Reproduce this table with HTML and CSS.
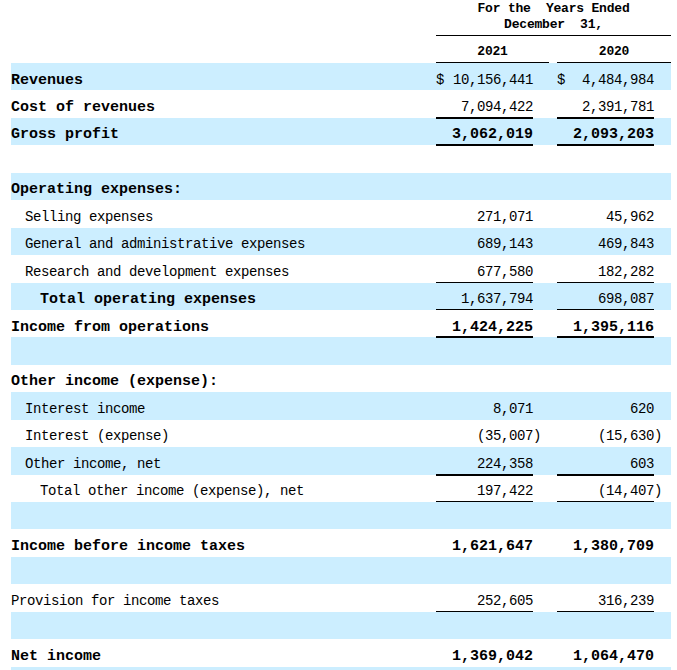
FILE: index.html
```html
<!DOCTYPE html>
<html>
<head>
<meta charset="utf-8">
<link rel="stylesheet" href="styles.css">
</head>
<body>
<div class="table">
  <div class="head head-top">
    <div class="hcell label-space"></div>
    <div class="hcell span-all"><span class="htext">For the  Years Ended
December  31,</span></div>
  </div>
  <div class="head head-years">
    <div class="hcell label-space"></div>
    <div class="hcell year y1">2021</div>
    <div class="hcell gap"></div>
    <div class="hcell year y2">2020</div>
  </div>
  <div class="body">
    <div class="row">
      <div class="label b">Revenues</div>
      <div class="val money"><span>$</span><span>10,156,441</span></div><div class="pad"></div><div class="gap"></div>
      <div class="val money"><span>$</span><span>4,484,984</span></div><div class="pad"></div>
    </div>
    <div class="row">
      <div class="label b">Cost of revenues</div>
      <div class="val thick">7,094,422</div><div class="pad"></div><div class="gap"></div>
      <div class="val thick">2,391,781</div><div class="pad"></div>
    </div>
    <div class="row">
      <div class="label b">Gross profit</div>
      <div class="val b thick">3,062,019</div><div class="pad"></div><div class="gap"></div>
      <div class="val b thick">2,093,203</div><div class="pad"></div>
    </div>
    <div class="row"></div>
    <div class="row">
      <div class="label b">Operating expenses:</div>
    </div>
    <div class="row">
      <div class="label i1">Selling expenses</div>
      <div class="val">271,071</div><div class="pad"></div><div class="gap"></div>
      <div class="val">45,962</div><div class="pad"></div>
    </div>
    <div class="row">
      <div class="label i1">General and administrative expenses</div>
      <div class="val">689,143</div><div class="pad"></div><div class="gap"></div>
      <div class="val">469,843</div><div class="pad"></div>
    </div>
    <div class="row">
      <div class="label i1">Research and development expenses</div>
      <div class="val thin">677,580</div><div class="pad"></div><div class="gap"></div>
      <div class="val thin">182,282</div><div class="pad"></div>
    </div>
    <div class="row">
      <div class="label b i2">Total operating expenses</div>
      <div class="val thin">1,637,794</div><div class="pad"></div><div class="gap"></div>
      <div class="val thin">698,087</div><div class="pad"></div>
    </div>
    <div class="row">
      <div class="label b">Income from operations</div>
      <div class="val b thick">1,424,225</div><div class="pad"></div><div class="gap"></div>
      <div class="val b thick">1,395,116</div><div class="pad"></div>
    </div>
    <div class="row"></div>
    <div class="row">
      <div class="label b">Other income (expense):</div>
    </div>
    <div class="row">
      <div class="label i1">Interest income</div>
      <div class="val">8,071</div><div class="pad"></div><div class="gap"></div>
      <div class="val">620</div><div class="pad"></div>
    </div>
    <div class="row">
      <div class="label i1">Interest (expense)</div>
      <div class="val">(35,007</div><div class="pad">)</div><div class="gap"></div>
      <div class="val">(15,630</div><div class="pad">)</div>
    </div>
    <div class="row">
      <div class="label i1">Other income, net</div>
      <div class="val thick">224,358</div><div class="pad"></div><div class="gap"></div>
      <div class="val thick">603</div><div class="pad"></div>
    </div>
    <div class="row">
      <div class="label i2">Total other income (expense), net</div>
      <div class="val thin">197,422</div><div class="pad"></div><div class="gap"></div>
      <div class="val thin">(14,407</div><div class="pad">)</div>
    </div>
    <div class="row"></div>
    <div class="row">
      <div class="label b">Income before income taxes</div>
      <div class="val b">1,621,647</div><div class="pad"></div><div class="gap"></div>
      <div class="val b">1,380,709</div><div class="pad"></div>
    </div>
    <div class="row"></div>
    <div class="row">
      <div class="label">Provision for income taxes</div>
      <div class="val thin">252,605</div><div class="pad"></div><div class="gap"></div>
      <div class="val thin">316,239</div><div class="pad"></div>
    </div>
    <div class="row"></div>
    <div class="row">
      <div class="label b">Net income</div>
      <div class="val b">1,369,042</div><div class="pad"></div><div class="gap"></div>
      <div class="val b">1,064,470</div><div class="pad"></div>
    </div>
    <div class="row"></div>
  </div>
</div>
</body>
</html>
```

FILE: styles.css
```css
html, body {
  margin: 0;
  padding: 0;
  background: #ffffff;
}

body {
  font-family: "Liberation Mono", "DejaVu Sans Mono", monospace;
  color: #000000;
  overflow: hidden;
}

.table {
  margin-left: 11px;
  width: 660px;
}

.head {
  display: grid;
  grid-template-columns: 425px 113px 8px 114px;
  font-weight: bold;
  font-size: 13px;
  letter-spacing: -0.2px;
  line-height: 16px;
}

.head-top {
  height: 36px;
  grid-template-columns: 425px 235px;
}

.head-top .span-all {
  border-bottom: 1px solid #000;
  text-align: center;
  padding-top: 1px;
  box-sizing: border-box;
}

.htext {
  white-space: pre;
}

.head-years {
  height: 27px;
}

.head-years .year {
  text-align: center;
  border-bottom: 1px solid #000;
  padding-top: 8px;
  box-sizing: border-box;
}

.body .row {
  display: grid;
  grid-template-columns: 425px 97px 16px 8px 97px 17px;
  height: 27.45px;
  align-items: stretch;
  font-size: 14px;
  letter-spacing: -0.4px;
  line-height: 15px;
}

.body .row:nth-child(odd) {
  background: #cceeff;
}

.label,
.val,
.pad {
  padding-top: 9.6px;
  box-sizing: border-box;
  white-space: pre;
}

.b {
  font-weight: bold;
  font-size: 15px;
  letter-spacing: 0;
}

.i1 {
  padding-left: 14px;
}

.i2 {
  padding-left: 29px;
}

.val {
  text-align: right;
}

.money {
  display: flex;
  justify-content: space-between;
}

.thin {
  border-bottom: 1px solid #000;
}

.thick {
  border-bottom: 2px solid #000;
  margin-bottom: -1px;
}
```
